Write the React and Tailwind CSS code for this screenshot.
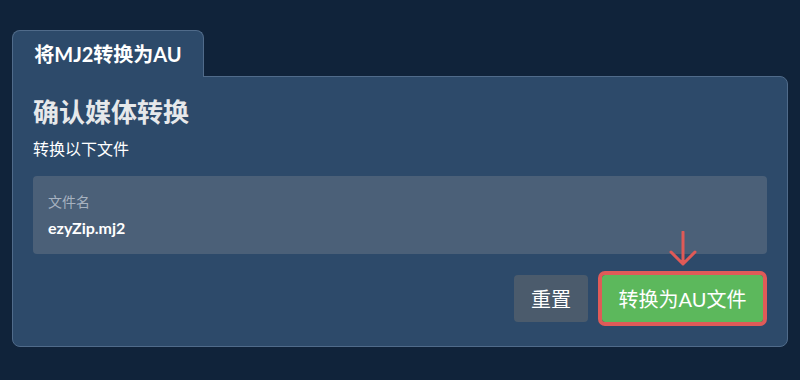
export default function App() {
  const font = { fontFamily: 'Lato, "Noto Sans CJK SC", sans-serif' };
  return (
    <div className="w-[800px] h-[380px] bg-[#10233a] pt-[30px] px-[12px]" style={font}>
      <div className="flex">
        <div className="w-[192px] h-[47px] -mb-px relative z-10 bg-[#2d4a6a] border border-b-0 border-[#506b8a] rounded-t-[8px] flex items-center justify-center text-white font-bold text-[20px]">
          将MJ2转换为AU
        </div>
      </div>
      <div className="w-[776px] bg-[#2d4a6a] border border-[#506b8a] rounded-tr-[8px] rounded-b-[8px] px-5 pt-[20px] pb-[24px]">
        <h1 className="text-[26px] leading-[30px] font-bold text-[#e6e8ea]">确认媒体转换</h1>
        <p className="mt-[10px] text-[16px] leading-[24px] text-white">转换以下文件</p>
        <div className="mt-[15px] h-[78px] bg-[#4b6078] rounded-[4px] px-[15px] pt-[16px]">
          <div className="text-[14px] leading-[20px] text-[#a7b2c0]">文件名</div>
          <div className="mt-[4px] text-[16px] leading-[24px] font-bold text-white">ezyZip.mj2</div>
        </div>
        <div className="mt-[21px] flex justify-end gap-[14px] pr-[4px]">
          <button className="h-[47px] w-[74px] rounded-[4px] bg-[#4b5b6c] text-[20px] text-white">重置</button>
          <div className="relative">
            <svg className="absolute left-1/2 -translate-x-1/2 bottom-[55px]" width="30" height="36" viewBox="0 0 30 36" fill="none">
              <path d="M15 1 V33 M3 21 L15 33 L27 21" stroke="#e05a57" strokeWidth="3" strokeLinecap="round" strokeLinejoin="round" />
            </svg>
            <button className="h-[47px] w-[161px] rounded-[3px] bg-[#5cb85c] text-[20px] text-white outline-[4px] outline-solid outline-[#df5b58]">
              转换为AU文件
            </button>
          </div>
        </div>
      </div>
    </div>
  );
}
